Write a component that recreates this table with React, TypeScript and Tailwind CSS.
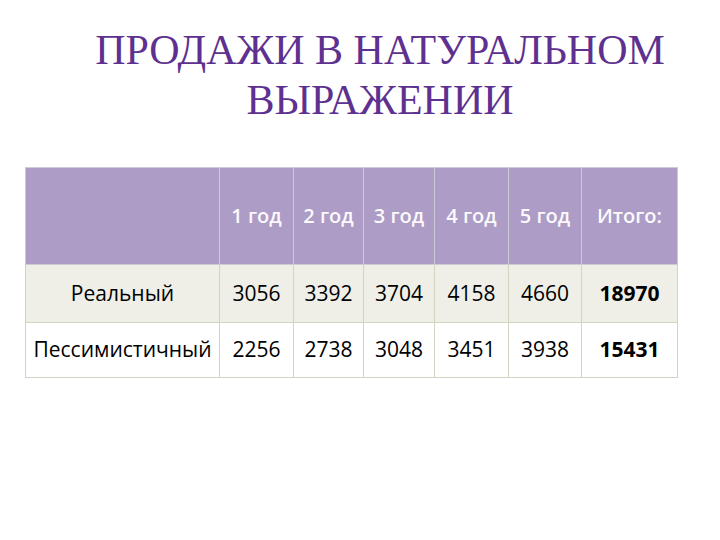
const years = ['1 год', '2 год', '3 год', '4 год', '5 год'];

const rows = [
  { name: 'Реальный', values: ['3056', '3392', '3704', '4158', '4660'], total: '18970', bg: 'bg-[#efefe8]', h: 'h-[58px]' },
  { name: 'Пессимистичный', values: ['2256', '2738', '3048', '3451', '3938'], total: '15431', bg: 'bg-white', h: 'h-[55px]' },
];

const widths = ['w-[74px]', 'w-[70px]', 'w-[71px]', 'w-[74px]', 'w-[73px]'];

export default function App() {
  return (
    <div className="w-[720px] h-[540px] bg-white overflow-hidden font-['Open_Sans',sans-serif]">
      <h1 className="pt-[25px] pl-[40px] text-center font-['Liberation_Serif',serif] text-[42px] leading-[50px] text-[#5e3190]">
        ПРОДАЖИ В НАТУРАЛЬНОМ
        <br />
        ВЫРАЖЕНИИ
      </h1>
      <table className="mt-[42px] ml-[25px] w-[652px] border-collapse table-fixed text-center">
        <thead>
          <tr className="h-[97px] bg-[#ad9cc6] text-[#fbf9fc] text-[20px]">
            <th className="w-[194px] border border-[#cfcbd6]" />
            {years.map((y, i) => (
              <th key={y} className={`${widths[i]} border border-[#cfcbd6] font-semibold`}>
                {y}
              </th>
            ))}
            <th className="w-[96px] border border-[#cfcbd6] font-semibold">Итого:</th>
          </tr>
        </thead>
        <tbody className="text-[21px] text-black">
          {rows.map((r) => (
            <tr key={r.name} className={`${r.h} ${r.bg}`}>
              <td className="border border-[#d3d3c2] whitespace-nowrap">{r.name}</td>
              {r.values.map((v, i) => (
                <td key={i} className="border border-[#d3d3c2]">
                  {v}
                </td>
              ))}
              <td className="border border-[#d3d3c2] font-bold">{r.total}</td>
            </tr>
          ))}
        </tbody>
      </table>
    </div>
  );
}
